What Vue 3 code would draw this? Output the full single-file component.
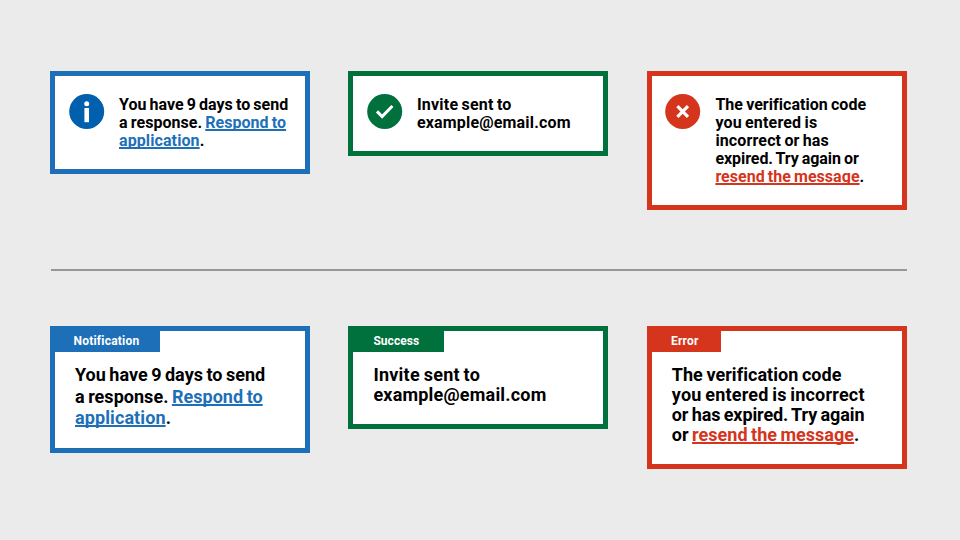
<script setup>
// Each line: text before the link, link text, text after it, and its tracking in px
const line = (before, link = '', after = '', tracking = 0) => ({ before, link, after, tracking })

const rows = [
  {
    kind: 'compact',
    cards: [
      {
        tone: 'info',
        lines: [
          line('You have 9 days to send', '', '', 0.02),
          line('a response. ', 'Respond to', '', 0.04),
          line('', 'application', '.', 0.1),
        ],
      },
      {
        tone: 'success',
        lines: [line('Invite sent to', '', '', 0.21), line('example@email.com', '', '', 0.17)],
      },
      {
        tone: 'error',
        lines: [
          line('The verification code', '', '', 0.04),
          line('you entered is', '', '', 0.17),
          line('incorrect or has', '', '', 0.14),
          line('expired. Try again or', '', '', -0.06),
          line('', 'resend the message', '.', 0.03),
        ],
      },
    ],
  },
  {
    kind: 'titled',
    cards: [
      {
        tone: 'info',
        title: 'Notification',
        lines: [
          line('You have 9 days to send', '', '', 0.01),
          line('a response. ', 'Respond to', '', 0.03),
          line('', 'application', '.', 0.1),
        ],
      },
      {
        tone: 'success',
        title: 'Success',
        lines: [line('Invite sent to', '', '', 0.25), line('example@email.com', '', '', 0.2)],
      },
      {
        tone: 'error',
        title: 'Error',
        lines: [
          line('The verification code', '', '', 0.05),
          line('you entered is incorrect', '', '', 0.2),
          line('or has expired. Try again', '', '', -0.1),
          line('or ', 'resend the message', '.', 0.02),
        ],
      },
    ],
  },
]
</script>

<template>
  <main class="page">
    <template v-for="(row, r) in rows" :key="row.kind">
      <hr v-if="r" class="divider" />
      <section class="row" :class="row.kind">
        <article v-for="card in row.cards" :key="card.tone" class="card" :class="card.tone">
          <h2 v-if="card.title" class="title">{{ card.title }}</h2>
          <svg v-else class="icon" viewBox="0 0 36 36">
            <circle class="disc" cx="17.7" cy="17.5" r="17.5" />
            <template v-if="card.tone === 'info'">
              <circle cx="17.7" cy="9.7" r="2.5" fill="#fff" />
              <path d="M15.4 14h4.6v14.2h-4.6z" fill="#fff" />
            </template>
            <path v-else-if="card.tone === 'success'" class="stroke" d="M10 17.4l5.1 5.1L25.4 12" />
            <path v-else class="stroke cross" d="M12.4 12.2l10.6 10.6M23 12.2l-10.6 10.6" />
          </svg>
          <p class="message">
            <span
              v-for="(l, i) in card.lines"
              :key="i"
              class="line"
              :style="{ letterSpacing: l.tracking + 'px' }"
            >{{ l.before }}<a v-if="l.link" class="link">{{ l.link }}</a>{{ l.after }}</span>
          </p>
        </article>
      </section>
    </template>
  </main>
</template>

<style>
body {
  background: #ebebeb;
}
</style>

<style scoped>
.page {
  box-sizing: border-box;
  width: 960px;
  height: 540px;
  padding: 70.5px 0 0 50px;
  overflow: hidden;
  background: #ebebeb;
  color: #000;
  font-family: Roboto, "Liberation Sans", sans-serif;
  font-weight: 700;
}
.row {
  display: grid;
  grid-template-columns: 260px 260px 260px;
  column-gap: 38.4px;
  align-items: start;
}
.compact {
  height: 198.5px;
}
.card {
  box-sizing: border-box;
  border: 5px solid var(--tone);
  background: #fff;
}
.info {
  --tone: #1d70b8;
  --disc: #0060ad;
}
.success {
  --tone: #00703c;
  --disc: #00703c;
}
.error {
  --tone: #d4351c;
  --disc: #d4351c;
}
.compact .card {
  display: flex;
  gap: 14.3px;
  padding: 18px 0 19.5px 13.7px;
}
.compact .success {
  padding-left: 13.3px;
}
.compact .error {
  padding-left: 13.3px;
}
.icon {
  flex: none;
  width: 36px;
  height: 36px;
}
.disc {
  fill: var(--disc);
}
.stroke {
  fill: none;
  stroke: #fff;
  stroke-width: 3;
}
.cross {
  stroke-width: 3.2;
}
.message {
  display: flex;
  flex-direction: column;
  align-items: flex-start;
  margin: 0;
}
.compact .message {
  padding-top: 2px;
  font-size: 16px;
  line-height: 18px;
  word-spacing: -0.9px;
}
.titled .message {
  padding: 13px 20px 19px;
  font-size: 18px;
  line-height: 20px;
  word-spacing: -1px;
}
.titled .info .message {
  padding: 12px 20px 18.5px;
  line-height: 21.7px;
}
.line {
  white-space: pre;
}
.link {
  color: var(--tone);
  text-decoration: underline;
  text-decoration-thickness: 2px;
  text-decoration-skip-ink: none;
}
.divider {
  width: 856px;
  height: 2px;
  margin: 0 0 55px 1px;
  border: 0;
  background: #979797;
}
.title {
  width: fit-content;
  height: 21px;
  margin: 0;
  padding: 0 21px 0 18.6px;
  background: var(--tone);
  color: #fff;
  font-size: 12px;
  line-height: 20px;
  letter-spacing: 0.2px;
}
.success .title {
  padding: 0 25px 0 20px;
  letter-spacing: 0.06px;
}
.error .title {
  padding: 0 22.5px 0 19.3px;
}
</style>
